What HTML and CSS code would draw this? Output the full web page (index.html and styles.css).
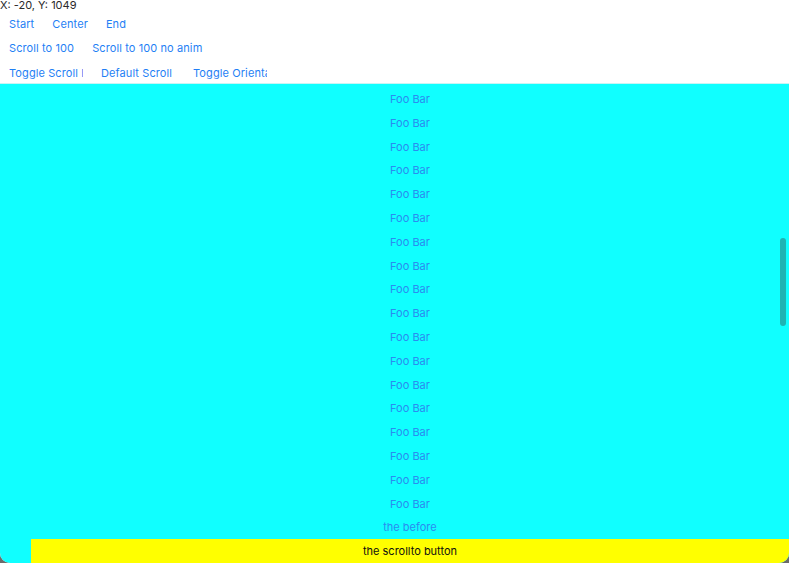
FILE: index.html
```html
<!DOCTYPE html>
<html>
<head>
<meta charset="utf-8">
<link rel="stylesheet" href="styles.css">
</head>
<body>
<div class="app">
  <div class="coords">X: -20, Y: 1049</div>
  <div class="row r1">
    <span class="btn">Start</span>
    <span class="btn">Center</span>
    <span class="btn">End</span>
  </div>
  <div class="row r2">
    <span class="btn">Scroll to 100</span>
    <span class="btn">Scroll to 100 no anim</span>
  </div>
  <div class="row r3">
    <span class="btn"><span class="clip">Toggle Scroll Enabled</span></span>
    <span class="btn"><span class="clip">Default Scroll Behavior</span></span>
    <span class="btn"><span class="clip">Toggle Orientation</span></span>
  </div>
  <div class="scroller">
    <div class="list">
      <div class="item">Foo Bar</div>
      <div class="item">Foo Bar</div>
      <div class="item">Foo Bar</div>
      <div class="item">Foo Bar</div>
      <div class="item">Foo Bar</div>
      <div class="item">Foo Bar</div>
      <div class="item">Foo Bar</div>
      <div class="item">Foo Bar</div>
      <div class="item">Foo Bar</div>
      <div class="item">Foo Bar</div>
      <div class="item">Foo Bar</div>
      <div class="item">Foo Bar</div>
      <div class="item">Foo Bar</div>
      <div class="item">Foo Bar</div>
      <div class="item">Foo Bar</div>
      <div class="item">Foo Bar</div>
      <div class="item">Foo Bar</div>
      <div class="item">Foo Bar</div>
      <div class="item">the before</div>
      <div class="item target">the scrollto button</div>
    </div>
    <div class="thumb"></div>
  </div>
</div>
</body>
</html>
```

FILE: styles.css
```css
html, body {
  margin: 0;
  padding: 0;
  background: #6b6b6b;
}
.app {
  width: 789px;
  height: 563px;
  background: #ffffff;
  border-radius: 0 0 10px 10px;
  overflow: hidden;
  display: flex;
  flex-direction: column;
  font-family: Inter, "Noto Sans", sans-serif;
  font-size: 11px;
}
.coords {
  height: 12px;
  line-height: 11px;
  color: #2a2a2a;
}
.row {
  display: flex;
  align-items: center;
}
.r1 { height: 24px; }
.r2 { height: 23px; }
.r3 { height: 21px; padding-top: 3px; }
.btn {
  display: flex;
  color: #1f7ff5;
  padding: 0 9px;
  white-space: nowrap;
  line-height: 14px;
  letter-spacing: 0.1px;
}
.clip {
  display: block;
  width: 74px;
  overflow: hidden;
}
.scroller {
  position: relative;
  flex: 1;
  background: #10ffff;
  border-top: 1px solid #c8f4f4;
  overflow: hidden;
  display: flex;
  flex-direction: column;
  justify-content: flex-end;
}
.list {
  padding-left: 31px;
  display: flex;
  flex-direction: column;
}
.item {
  height: 23.8px;
  display: flex;
  align-items: center;
  justify-content: center;
  color: #2a8cf0;
}
.item.target {
  background: #ffff00;
  color: #111111;
}
.thumb {
  position: absolute;
  right: 3px;
  top: 154px;
  width: 6px;
  height: 88px;
  border-radius: 3px;
  background: #1eb4b4;
}
```
